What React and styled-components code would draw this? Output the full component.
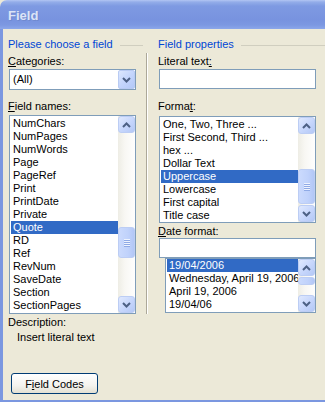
import React from 'react'
import styled, { createGlobalStyle } from 'styled-components'

const GlobalStyle = createGlobalStyle`
  html, body {
    margin: 0;
    padding: 0;
    background: #ece9d8;
  }
  body {
    font-family: "Liberation Sans", Arial, sans-serif;
    font-size: 11px;
    color: #000;
  }
`

const Window = styled.div`
  width: 325px;
  height: 402px;
  display: flex;
  flex-direction: column;
  overflow: hidden;
`

const TitleBar = styled.div`
  height: 29px;
  flex: none;
  display: flex;
  align-items: center;
  padding-left: 8px;
  border-top-left-radius: 7px;
  background: linear-gradient(
    to bottom,
    #b2c6f3 0,
    #93ade9 2px,
    #7e9ae2 6px,
    #7893df 20px,
    #7c98e2 25px,
    #8ca7ea 29px
  );
`

const Title = styled.span`
  font-family: "Liberation Sans", Arial, sans-serif;
  font-weight: bold;
  font-size: 13px;
  color: #dbe4f7;
  text-shadow: 1px 1px 0 #7089cf;
  margin-top: 1px;
`

const Frame = styled.div`
  flex: 1;
  display: flex;
  flex-direction: column;
  border-left: 3px solid #7b97e0;
  border-bottom: 2px solid #7b97e0;
  padding: 9px 0 0 5px;
`

const Columns = styled.div`
  display: flex;
`

const LeftColumn = styled.div`
  width: 140px;
  flex: none;
`

const RightColumn = styled.div`
  flex: 1;
  padding-left: 10px;
`

const SectionHeader = styled.div`
  display: flex;
  align-items: center;
  height: 13px;
  gap: 7px;
  padding-right: ${p => p.$trim || 0}px;
`

const HeaderText = styled.span`
  color: #0046d5;
  line-height: 13px;
  white-space: nowrap;
`

const HeaderRule = styled.div`
  flex: 1;
  height: 1px;
  margin-top: 1px;
  background: #d0cebf;
`

const Panel = styled.div`
  margin-top: 2px;
  padding-top: 2px;
  display: flex;
  flex-direction: column;
  align-items: flex-start;
  ${p => p.$divider && `
    border-right: 1px solid #aca899;
    box-shadow: 1px 0 0 #fff;
    margin-right: 1px;
  `}
`

const Label = styled.div`
  line-height: 13px;
  height: 13px;
  margin-top: ${p => p.$gap || 0}px;
  padding-left: ${p => p.$indent || 0}px;
  white-space: nowrap;
`

const U = styled.span`
  text-decoration: underline;
`

const Select = styled.div`
  box-sizing: border-box;
  width: 127px;
  height: 21px;
  margin: 1px 0 0 1px;
  border: 1px solid #7f9db9;
  background: #fff;
  display: flex;
  align-items: stretch;
`

const SelectValue = styled.div`
  flex: 1;
  padding-left: 3px;
  line-height: 19px;
`

const DropButton = styled.div`
  width: 17px;
  box-sizing: border-box;
  margin: 0;
  border: 1px solid #b9cbf3;
  border-radius: 2px;
  background: linear-gradient(135deg, #dce7fe 0%, #c4d5fc 50%, #b3c8f7 100%);
  display: flex;
  align-items: center;
  justify-content: center;
`

const TextInput = styled.div`
  box-sizing: border-box;
  width: 157px;
  height: 20px;
  margin: ${p => p.$top || 0}px 0 0 1px;
  border: 1px solid #7f9db9;
  background: #fff;
`

const ListBox = styled.div`
  box-sizing: border-box;
  width: ${p => p.$width}px;
  height: ${p => p.$height}px;
  margin-top: ${p => p.$top || 0}px;
  margin-left: ${p => p.$left || 1}px;
  border: 1px solid #7f9db9;
  background: #fff;
  display: flex;
`

const Items = styled.div`
  flex: 1;
  min-width: 0;
  overflow: hidden;
  padding: ${p => (p.$flush ? 0 : 1)}px 0 0 1px;
`

const Item = styled.div`
  height: 13px;
  line-height: 13px;
  padding-left: 2px;
  white-space: nowrap;
  background: ${p => (p.$selected ? '#316ac5' : 'transparent')};
  color: ${p => (p.$selected ? '#fff' : '#000')};
`

const Scroll = styled.div`
  width: 17px;
  flex: none;
  display: flex;
  flex-direction: column;
  background: linear-gradient(to right, #eeede5 0%, #f8f7f3 40%, #fefefe 100%);
`

const ScrollButton = styled.div`
  box-sizing: border-box;
  height: 17px;
  flex: none;
  border: 1px solid #bccdf4;
  border-radius: 3px;
  background: linear-gradient(135deg, #e0e9fe 0%, #c6d6fc 55%, #b4c8f6 100%);
  display: flex;
  align-items: center;
  justify-content: center;
`

const Track = styled.div`
  flex: 1;
  display: flex;
  flex-direction: column;
  padding-top: ${p => p.$offset}px;
`

const Thumb = styled.div`
  box-sizing: border-box;
  height: ${p => p.$size}px;
  border: 1px solid #bccdf4;
  border-radius: 3px;
  background: linear-gradient(to right, #cbdafd 0%, #c0d2fb 60%, #b3c7f6 100%);
  display: flex;
  flex-direction: column;
  align-items: center;
  justify-content: center;
  gap: 1px;
`

const Grip = styled.div`
  width: 6px;
  height: 1px;
  background: #eef3fe;
  box-shadow: 0 1px 0 #8faae6;
`

const Chevron = ({ up }) => (
  <svg width="9" height="6" viewBox="0 0 9 6">
    <polyline
      points={up ? '1,5 4.5,1.5 8,5' : '1,1 4.5,4.5 8,1'}
      fill="none"
      stroke="#4d6185"
      strokeWidth="2"
    />
  </svg>
)

const ScrollBar = ({ offset, size }) => (
  <Scroll>
    <ScrollButton><Chevron up /></ScrollButton>
    <Track $offset={offset}>
      <Thumb $size={size}>
        {size > 16 && <><Grip /><Grip /><Grip /><Grip /></>}
      </Thumb>
    </Track>
    <ScrollButton><Chevron /></ScrollButton>
  </Scroll>
)

const FieldButton = styled.button`
  box-sizing: border-box;
  width: 87px;
  height: 21px;
  margin: ${p => p.$top}px 0 0 3px;
  padding: 0;
  border: 1px solid #003c74;
  border-radius: 3px;
  background: linear-gradient(to bottom, #ffffff 0%, #f4f3ee 60%, #e3e0d3 100%);
  font-family: "Liberation Sans", Arial, sans-serif;
  font-size: 11px;
  color: #000;
`

const fieldNames = [
  'NumChars', 'NumPages', 'NumWords', 'Page', 'PageRef', 'Print', 'PrintDate',
  'Private', 'Quote', 'RD', 'Ref', 'RevNum', 'SaveDate', 'Section', 'SectionPages',
]

const formats = [
  'One, Two, Three ...', 'First Second, Third ...', 'hex ...', 'Dollar Text',
  'Uppercase', 'Lowercase', 'First capital', 'Title case',
]

const dateFormats = ['19/04/2006', 'Wednesday, April 19, 2006', 'April 19, 2006', '19/04/06']

const App = () => (
  <>
    <GlobalStyle />
    <Window>
      <TitleBar><Title>Field</Title></TitleBar>
      <Frame>
        <Columns>
          <LeftColumn>
            <SectionHeader $trim={5}>
              <HeaderText>Please choose a field</HeaderText>
              <HeaderRule />
            </SectionHeader>
            <Panel $divider>
              <Label><U>C</U>ategories:</Label>
              <Select>
                <SelectValue>(All)</SelectValue>
                <DropButton><Chevron /></DropButton>
              </Select>
              <Label $gap={10}><U>F</U>ield names:</Label>
              <ListBox $width={127} $height={199} $top={2}>
                <Items>
                  {fieldNames.map(n => (
                    <Item key={n} $selected={n === 'Quote'}>{n}</Item>
                  ))}
                </Items>
                <ScrollBar offset={94} size={31} />
              </ListBox>
            </Panel>
          </LeftColumn>
          <RightColumn>
            <SectionHeader>
              <HeaderText>Field properties</HeaderText>
              <HeaderRule />
            </SectionHeader>
            <Panel>
              <Label>Literal text<U>:</U></Label>
              <TextInput $top={1} />
              <Label $gap={11}>Forma<U>t</U>:</Label>
              <ListBox $width={157} $height={107} $top={3}>
                <Items>
                  {formats.map(n => (
                    <Item key={n} $selected={n === 'Uppercase'}>{n}</Item>
                  ))}
                </Items>
                <ScrollBar offset={35} size={35} />
              </ListBox>
              <Label $gap={2}><U>D</U>ate format:</Label>
              <TextInput />
              <ListBox $width={151} $height={55} $left={7}>
                <Items $flush>
                  {dateFormats.map(n => (
                    <Item key={n} $selected={n === '19/04/2006'}>{n}</Item>
                  ))}
                </Items>
                <ScrollBar offset={1} size={8} />
              </ListBox>
            </Panel>
          </RightColumn>
        </Columns>
        <Label $gap={2}>Description:</Label>
        <Label $gap={2} $indent={9}>Insert literal text</Label>
        <FieldButton $top={29}>F<U>i</U>eld Codes</FieldButton>
      </Frame>
    </Window>
  </>
)

export default App
